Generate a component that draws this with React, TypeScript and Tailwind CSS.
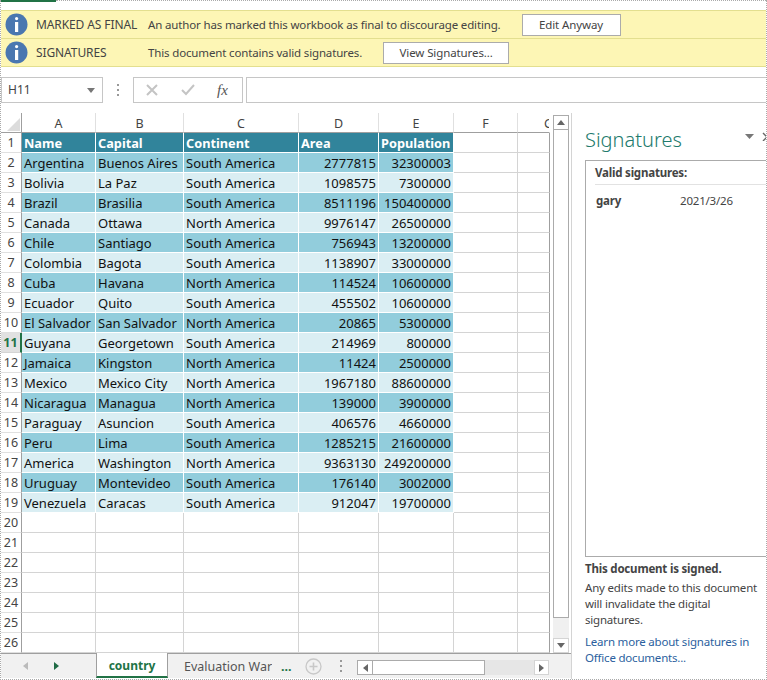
const rows = [
  ["Argentina", "Buenos Aires", "South America", "2777815", "32300003"],
  ["Bolivia", "La Paz", "South America", "1098575", "7300000"],
  ["Brazil", "Brasilia", "South America", "8511196", "150400000"],
  ["Canada", "Ottawa", "North America", "9976147", "26500000"],
  ["Chile", "Santiago", "South America", "756943", "13200000"],
  ["Colombia", "Bagota", "South America", "1138907", "33000000"],
  ["Cuba", "Havana", "North America", "114524", "10600000"],
  ["Ecuador", "Quito", "South America", "455502", "10600000"],
  ["El Salvador", "San Salvador", "North America", "20865", "5300000"],
  ["Guyana", "Georgetown", "South America", "214969", "800000"],
  ["Jamaica", "Kingston", "North America", "11424", "2500000"],
  ["Mexico", "Mexico City", "North America", "1967180", "88600000"],
  ["Nicaragua", "Managua", "North America", "139000", "3900000"],
  ["Paraguay", "Asuncion", "South America", "406576", "4660000"],
  ["Peru", "Lima", "South America", "1285215", "21600000"],
  ["America", "Washington", "North America", "9363130", "249200000"],
  ["Uruguay", "Montevideo", "South America", "176140", "3002000"],
  ["Venezuela", "Caracas", "South America", "912047", "19700000"],
];

const gridCols = "grid grid-cols-[21px_74px_88px_115px_80px_75px_64px_32px] auto-rows-[20px] w-[549px]";
const cellLine = "h-5 border-r border-b border-[#d4d4d4]";

function InfoIcon() {
  return (
    <svg width="23" height="23" viewBox="0 0 23 23" className="shrink-0">
      <circle cx="11.5" cy="11.5" r="11" fill="#4a77b0" />
      <rect x="10" y="4" width="3.2" height="3.2" rx="1.6" fill="#fff" />
      <rect x="10" y="9" width="3.2" height="10" fill="#fff" />
    </svg>
  );
}

function Banner({ label, text, button, buttonClass }: { label: string; text: string; button: string; buttonClass: string }) {
  return (
    <div className="flex h-7 items-center border-b border-[#e3df8f] bg-[#fdf6b5] pl-[4px] text-[#444]">
      <InfoIcon />
      <span className="ml-[8px] w-[112px] shrink-0 whitespace-nowrap text-[12px] tracking-[-0.1px]">{label}</span>
      <span className="whitespace-nowrap text-[11.5px] tracking-[-0.15px]">{text}</span>
      <button className={`flex h-[22px] shrink-0 items-center justify-center border border-[#ababab] bg-white text-[11.5px] tracking-[-0.1px] text-[#444] ${buttonClass}`}>
        {button}
      </button>
    </div>
  );
}

function FormulaBar() {
  return (
    <div className="flex h-[26px] items-stretch">
      <div className="flex w-[102px] items-center justify-between border border-[#c6c6c6] pl-[6px] pr-[7px] text-[12px] text-[#444]">
        <span>H11</span>
        <svg width="8" height="5" viewBox="0 0 8 5"><path d="M0 0h8L4 5z" fill="#777" /></svg>
      </div>
      <div className="flex w-[30px] flex-col items-center justify-center gap-[3px]">
        <span className="h-[2px] w-[2px] bg-[#999]" />
        <span className="h-[2px] w-[2px] bg-[#999]" />
        <span className="h-[2px] w-[2px] bg-[#999]" />
      </div>
      <div className="flex w-[110px] items-center border border-[#c6c6c6] pl-[12px]">
        <svg width="12" height="12" viewBox="0 0 12 12"><path d="M1 1l10 10M11 1L1 11" stroke="#c4c4c4" strokeWidth="2" fill="none" /></svg>
        <svg width="14" height="12" viewBox="0 0 14 12" className="ml-[23px]"><path d="M1 6l4 4 8-9" stroke="#c4c4c4" strokeWidth="2" fill="none" /></svg>
        <span className="ml-[22px] font-['Liberation_Serif',serif] text-[15px] italic text-[#555]">fx</span>
      </div>
      <div className="ml-[3px] flex-1 border-y border-l border-[#c6c6c6]" />
    </div>
  );
}

function SheetGrid() {
  return (
    <div className={gridCols}>
      <div className="flex h-5 items-end border-r border-b border-[#9f9f9f] bg-white pb-[1px] pl-[6px]">
        <svg width="13" height="13" viewBox="0 0 13 13"><path d="M13 0v13H0z" fill="#dcdcdc" /></svg>
      </div>
      {["A", "B", "C", "D", "E", "F"].map((c) => (
        <div key={c} className="flex h-5 items-center justify-center border-r border-b border-[#e0e0e0] border-b-[#9f9f9f] pt-[2px] text-[12.5px] leading-[17px] text-[#444]">
          {c}
        </div>
      ))}
      <div className="flex h-5 items-center justify-center overflow-hidden border-r border-b border-white border-b-[#9f9f9f] pl-[30px] pt-[2px] text-[12.5px] leading-[17px] text-[#444]">
        G
      </div>

      <RowHead n={1} />
      {["Name", "Capital", "Continent", "Area", "Population"].map((c) => (
        <div key={c} className="flex h-5 items-center overflow-hidden whitespace-nowrap border-r border-b border-white bg-[#31849b] pl-[2px] pt-px text-[12.75px] font-bold leading-[18px] text-white">
          {c}
        </div>
      ))}
      <div className={cellLine} />
      <div className={`${cellLine} border-r-[#9f9f9f]`} />

      {rows.map((r, i) => {
        const fill = i % 2 === 0 ? "bg-[#92cddc]" : "bg-[#daeef3]";
        return [
          <RowHead key={`h${i}`} n={i + 2} active={i + 2 === 11} />,
          ...r.map((v, j) => (
            <div
              key={j}
              className={`flex h-5 items-center overflow-hidden whitespace-nowrap border-r border-b border-white px-[2px] pt-px text-[13px] leading-[18px] text-[#111] ${fill} ${j > 2 ? "justify-end" : ""}`}
            >
              {v}
            </div>
          )),
          <div key={`f${i}`} className={cellLine} />,
          <div key={`g${i}`} className={`${cellLine} border-r-[#9f9f9f]`} />,
        ];
      })}

      {[20, 21, 22, 23, 24, 25, 26].map((n) => [
        <RowHead key={n} n={n} />,
        ...[0, 1, 2, 3, 4, 5].map((j) => <div key={`${n}-${j}`} className={cellLine} />),
        <div key={`${n}-g`} className={`${cellLine} border-r-[#9f9f9f]`} />,
      ])}
    </div>
  );
}

function RowHead({ n, active }: { n: number; active?: boolean }) {
  return (
    <div
      className={
        active
          ? "flex h-5 items-center justify-center border-r-2 border-b border-[#217346] border-b-[#d4d4d4] bg-[#e1e1e1] pt-px text-[12.5px] font-bold leading-[18px] text-[#217346]"
          : "flex h-5 items-center justify-center border-r border-b border-[#9f9f9f] border-b-[#e0e0e0] pt-px text-[12.5px] leading-[18px] text-[#444]"
      }
    >
      {n}
    </div>
  );
}

function VScroll() {
  return (
    <div className="ml-[3px] mt-[2px] flex h-[538px] w-4 flex-col bg-[#f0f0f0]">
      <div className="flex h-[15px] items-center justify-center border border-[#ababab] bg-white">
        <svg width="8" height="5" viewBox="0 0 8 5"><path d="M4 0l4 5H0z" fill="#666" /></svg>
      </div>
      <div className="h-[488px] border-x border-b border-[#ababab] bg-white" />
      <div className="flex-1" />
      <div className="flex h-[15px] items-center justify-center border border-[#d4d4d4] bg-white">
        <svg width="8" height="5" viewBox="0 0 8 5"><path d="M0 0h8L4 5z" fill="#666" /></svg>
      </div>
    </div>
  );
}

function SheetTabs() {
  return (
    <div className="flex h-[25px] items-stretch border-t border-[#9f9f9f] bg-[#f1f1f1] text-[12.5px]">
      <div className="flex w-[95px] items-center pl-[22px]">
        <svg width="5" height="8" viewBox="0 0 5 8"><path d="M5 0v8L0 4z" fill="#bbb" /></svg>
        <svg width="5" height="8" viewBox="0 0 5 8" className="ml-[26px]"><path d="M0 0v8l5-4z" fill="#1f6b45" /></svg>
      </div>
      <div className="-mt-px flex w-[72px] items-center justify-center border-x border-b-2 border-[#9f9f9f] border-b-[#217346] bg-white pt-[3px] text-[12px] font-bold leading-[18px] text-[#217346]">
        country
      </div>
      <div className="ml-[16px] flex w-[88px] items-center overflow-hidden whitespace-nowrap pt-[2px] leading-[18px] text-[#555]">Evaluation War</div>
      <div className="ml-[9px] flex w-[12px] items-center pt-[2px] text-[12.5px] font-bold leading-none text-[#217346]">...</div>
      <div className="ml-[12px] flex items-center">
        <svg width="17" height="17" viewBox="0 0 17 17">
          <circle cx="8.5" cy="8.5" r="7.5" fill="none" stroke="#c8c8c8" strokeWidth="1.3" />
          <path d="M8.5 4.5v8M4.5 8.5h8" stroke="#c8c8c8" strokeWidth="1.6" />
        </svg>
      </div>
      <div className="ml-[18px] flex w-[2px] flex-col items-center justify-center gap-[3px]">
        <span className="h-[2px] w-[2px] bg-[#999]" />
        <span className="h-[2px] w-[2px] bg-[#999]" />
        <span className="h-[2px] w-[2px] bg-[#999]" />
      </div>
      <div className="ml-[15px] mt-[6px] flex h-[15px] w-[192px] bg-[#e6e6e6]">
        <div className="flex w-[16px] items-center justify-center border border-[#ababab] bg-white">
          <svg width="5" height="8" viewBox="0 0 5 8"><path d="M5 0v8L0 4z" fill="#666" /></svg>
        </div>
        <div className="w-[112px] border-y border-r border-[#ababab] bg-white" />
        <div className="flex-1" />
        <div className="flex w-[15px] items-center justify-center border border-[#d4d4d4] bg-white">
          <svg width="5" height="8" viewBox="0 0 5 8"><path d="M0 0v8l5-4z" fill="#666" /></svg>
        </div>
      </div>
    </div>
  );
}

function SignaturesPane() {
  return (
    <div className="flex min-w-0 flex-1 flex-col border-l border-[#d4d4d4] pl-[13px] text-[11.5px] tracking-[-0.2px] text-[#444]">
      <div className="flex h-[47px] items-center justify-between pt-[7px]">
        <span className="text-[20px] font-light tracking-normal text-[#217a6c]">Signatures</span>
        <div className="-mr-[5px] flex items-center gap-[8px] pb-[8px]">
          <svg width="9" height="5" viewBox="0 0 9 5"><path d="M0 0h9L4.5 5z" fill="#777" /></svg>
          <svg width="9" height="9" viewBox="0 0 9 9"><path d="M1 1l8 8M9 1L1 9" stroke="#666" strokeWidth="1.4" fill="none" /></svg>
        </div>
      </div>
      <div className="flex h-[397px] flex-col border-y border-l border-[#ababab] pl-[9px]">
        <div className="flex h-[24px] items-center border-b border-[#e2e2e2] font-bold">Valid signatures:</div>
        <div className="mt-[7px] flex h-[18px] items-center pl-px">
          <span className="w-[84px] font-bold">gary</span>
          <span>2021/3/26</span>
        </div>
      </div>
      <div className="mt-[4px] font-bold leading-4">This document is signed.</div>
      <div className="mt-[3px] leading-4">Any edits made to this document will invalidate the digital signatures.</div>
      <div className="mt-[6px] leading-4 text-[#2b5f9e]">Learn more about signatures in Office documents...</div>
    </div>
  );
}

export default function App() {
  return (
    <div className="flex h-[680px] w-[767px] flex-col overflow-hidden border-x border-b border-dotted border-[#aaa] bg-white font-['Noto_Sans',sans-serif]">
      <div className="flex h-[10px] items-start">
        <div className="h-[2px] w-[55px] bg-[#217346]" />
        <div className="flex-1 border-t border-dotted border-[#aaa]" />
      </div>
      <div className="border-t border-[#e3df8f]">
        <Banner label="MARKED AS FINAL" text="An author has marked this workbook as final to discourage editing." button="Edit Anyway" buttonClass="ml-[21px] w-[99px]" />
        <Banner label="SIGNATURES" text="This document contains valid signatures." button="View Signatures..." buttonClass="ml-[21px] w-[126px]" />
      </div>
      <div className="mt-[10px]">
        <FormulaBar />
      </div>
      <div className="mt-[10px] flex min-h-0 flex-1">
        <div className="flex w-[570px] shrink-0 flex-col">
          <div className="flex items-start">
            <SheetGrid />
            <VScroll />
          </div>
          <SheetTabs />
        </div>
        <SignaturesPane />
      </div>
    </div>
  );
}
